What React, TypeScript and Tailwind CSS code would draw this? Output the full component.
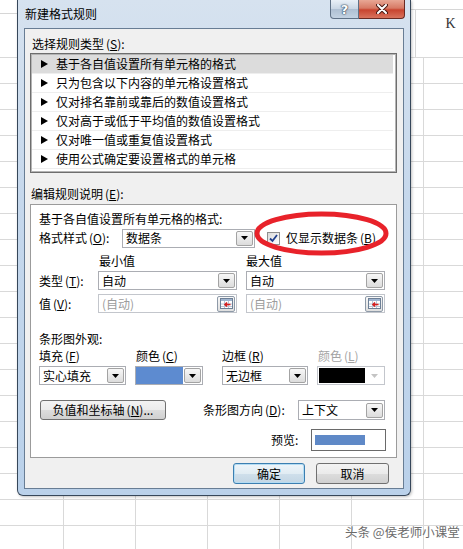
import React from "react";

function Tri() {
  return (
    <svg width="7" height="8" viewBox="0 0 7 8" className="shrink-0">
      <polygon points="0,0 7,4 0,8" fill="#000" />
    </svg>
  );
}

function DropBtn({ disabled = false }: { disabled?: boolean }) {
  if (disabled) {
    return (
      <div className="flex h-[15px] w-[17px] items-center justify-center">
        <svg width="7" height="4" viewBox="0 0 7 4">
          <path d="M0 0H7L3.5 4Z" fill="#c4c4c4" />
        </svg>
      </div>
    );
  }
  return (
    <div className="flex h-[15px] w-[17px] shrink-0 items-center justify-center rounded-[2px] border border-[#a3a3a3] bg-[linear-gradient(#f7f7f7,#dcdcdc)]">
      <svg width="7" height="4" viewBox="0 0 7 4">
        <path d="M0 0H7L3.5 4Z" fill="#000" />
      </svg>
    </div>
  );
}

function Select({ className, text }: { className: string; text: string }) {
  return (
    <div
      className={`flex h-[19px] items-center justify-between border border-[#abadb3] bg-white pl-[3px] pr-[1px] ${className}`}
    >
      <span className="leading-[16px]">{text}</span>
      <DropBtn />
    </div>
  );
}

function RefBtn() {
  return (
    <div className="flex h-[16px] w-[18px] shrink-0 items-center justify-center rounded-[2px] border border-[#8e9aa8] bg-[linear-gradient(#f7f7f7,#dfdfdf)]">
      <svg width="13" height="11" viewBox="0 0 13 11">
        <rect x="0.5" y="0.5" width="12" height="10" fill="#fff" stroke="#6d7f95" />
        <rect x="1" y="1" width="11" height="2" fill="#9fb4cf" />
        <path d="M1 6H12M1 8.5H12M4.5 3V10M8.5 3V10" stroke="#b9c6d6" />
        <path d="M10.5 6.5H5M7 4.5L5 6.5L7 8.5" stroke="#d42020" strokeWidth="1.6" fill="none" />
      </svg>
    </div>
  );
}

function RefInput({ className }: { className: string }) {
  return (
    <div
      className={`flex h-[19px] items-center justify-between border border-[#c3c6cc] bg-white pl-[3px] pr-[1px] ${className}`}
    >
      <span className="leading-[16px] text-[#9c9c9c]">(自动)</span>
      <RefBtn />
    </div>
  );
}

function U({ c }: { c: string }) {
  return (
    <span className="ml-[2px]">
      (<span className="underline">{c}</span>)
    </span>
  );
}

const rules = [
  "基于各自值设置所有单元格的格式",
  "只为包含以下内容的单元格设置格式",
  "仅对排名靠前或靠后的数值设置格式",
  "仅对高于或低于平均值的数值设置格式",
  "仅对唯一值或重复值设置格式",
  "使用公式确定要设置格式的单元格",
];

export default function App() {
  return (
    <div className="relative h-[549px] w-[463px] overflow-hidden bg-white font-['Noto_Sans_CJK_SC','Noto_Sans',sans-serif] text-[12px] leading-[16px] text-black">
      {/* spreadsheet background */}
      <div className="flex h-[57px] items-start">
        <div className="mt-[13px] w-[17px] border-t border-[#d6d6d6]" />
        <div className="flex-1" />
        <div className="mt-[9px] flex h-[48px] w-[53px] border-t border-[#d6d6d6]">
          <div className="w-[13px]" />
          <div className="h-full w-[72px] border-l border-[#d6d6d6] pl-[29px] pt-[6px] font-['Liberation_Serif',serif] text-[14px] text-[#333]">
            K
          </div>
        </div>
      </div>
      <div className="h-[492px] [background-image:linear-gradient(to_right,#d9d9d9_1px,transparent_1px),linear-gradient(to_bottom,#d9d9d9_1px,transparent_1px)] [background-position:63px_0px] [background-size:72px_26px]" />

      {/* dialog window */}
      <div className="absolute left-[17px] top-0 flex h-[496px] w-[394px] flex-col rounded-b-[6px] border-x border-b border-[#36475a] bg-[linear-gradient(180deg,#d6e2ef_0%,#c6d8ec_40%,#bad1ea_100%)] shadow-[1px_1px_3px_rgba(0,0,0,0.25)]">
        {/* title bar */}
        <div className="flex h-[28px] items-start pr-[5px]">
          <div className="ml-[7px] mt-[6px] leading-[16px]">新建格式规则</div>
          <div className="ml-auto flex">
            <div className="flex h-[19px] w-[29px] items-center justify-center rounded-bl-[4px] border border-t-0 border-[#5f7186] bg-[linear-gradient(180deg,#e9f0f7_0%,#c9d6e4_50%,#aebfd2_51%,#c3d2e2_100%)]">
              <span className="font-['DejaVu_Sans',sans-serif] text-[13px] font-bold leading-[15px] text-white [text-shadow:0_0_1px_#33475d,0_0_1px_#33475d,0_0_2px_#33475d]">
                ?
              </span>
            </div>
            <div className="flex h-[19px] w-[46px] items-center justify-center rounded-br-[4px] border border-l-0 border-t-0 border-[#6a2a22] bg-[linear-gradient(180deg,#e8a795_0%,#d77a65_45%,#c8442f_55%,#d9735d_100%)]">
              <svg width="12" height="10" viewBox="0 0 12 10">
                <path d="M2 1L10 9M10 1L2 9" stroke="#4a1a14" strokeWidth="4" strokeLinecap="round" />
                <path d="M2 1L10 9M10 1L2 9" stroke="#fff" strokeWidth="2" strokeLinecap="round" />
              </svg>
            </div>
          </div>
        </div>

        {/* inner panel */}
        <div className="mx-[6px] flex h-[461px] flex-col border border-[#687d94] bg-[#f0f0f0]">
          <div className="ml-[7px] mt-[7px] h-[16px]">
            选择规则类型<U c="S" />:
          </div>
          <div className="ml-[5px] mt-[1px] h-[120px] w-[367px] border border-[#6e6e6e]">
            <div className="h-full border border-[#b4b4b4] bg-white">
              {rules.map((r, i) => (
                <div
                  key={r}
                  className={`mr-[2px] flex h-[19px] items-center border-b border-[#eeeeee] pl-[9px] ${i === 0 ? "bg-[#dcdcdc]" : ""}`}
                >
                  <Tri />
                  <span className="ml-[8px]">{r}</span>
                </div>
              ))}
            </div>
          </div>

          <div className="ml-[6px] mt-[13px] h-[16px]">
            编辑规则说明<U c="E" />:
          </div>
          <div className="ml-[5px] mt-[2px] h-[254px] w-[367px] border border-[#9b9b9b] bg-white pl-[8px]">
            <div className="mt-[6px] h-[16px]">基于各自值设置所有单元格的格式:</div>
            <div className="mt-[2px] flex h-[18px] items-center">
              <div className="w-[83px]">
                格式样式<U c="O" />:
              </div>
              <Select className="h-[18px] w-[133px]" text="数据条" />
              <div className="ml-[12px] flex h-[13px] w-[13px] items-center justify-center border border-[#8f8f8f] bg-[linear-gradient(135deg,#dadada,#ffffff)]">
                <svg width="9" height="9" viewBox="0 0 9 9">
                  <path d="M1 4.5L3.5 7L8 1" stroke="#1f3f8c" strokeWidth="1.8" fill="none" />
                </svg>
              </div>
              <div className="ml-[6px]">
                仅显示数据条<U c="B" />
              </div>
            </div>
            <div className="mt-[6px] flex h-[16px]">
              <div className="w-[60px]" />
              <div className="w-[147px]">最小值</div>
              <div>最大值</div>
            </div>
            <div className="mt-[2px] flex h-[19px] items-center">
              <div className="w-[59px]">
                类型<U c="T" />:
              </div>
              <Select className="w-[139px]" text="自动" />
              <Select className="ml-[9px] w-[139px]" text="自动" />
            </div>
            <div className="mt-[4px] flex h-[19px] items-center">
              <div className="w-[59px]">
                值<U c="V" />:
              </div>
              <RefInput className="w-[139px]" />
              <RefInput className="ml-[9px] w-[139px]" />
            </div>

            <div className="mt-[18px] h-[16px]">条形图外观:</div>
            <div className="mt-[1px] flex h-[16px]">
              <div className="w-[97px]">
                填充<U c="F" />
              </div>
              <div className="w-[86px]">
                颜色<U c="C" />
              </div>
              <div className="w-[96px]">
                边框<U c="R" />
              </div>
              <div className="text-[#a3a3a3]">
                颜色<U c="L" />
              </div>
            </div>
            <div className="mt-[2px] flex h-[19px] items-center">
              <Select className="w-[87px]" text="实心填充" />
              <div className="ml-[9px] flex h-[19px] w-[68px] items-center justify-between border border-[#abadb3] bg-white pr-[1px]">
                <div className="h-[17px] w-[47px] bg-[#5d8bd0]" />
                <DropBtn />
              </div>
              <Select className="ml-[19px] w-[86px]" text="无边框" />
              <div className="ml-[9px] flex h-[19px] w-[68px] items-center justify-between border border-[#c3c6cc] bg-white pl-[1px] pr-[1px]">
                <div className="h-[15px] w-[46px] bg-black" />
                <DropBtn disabled />
              </div>
            </div>

            <div className="mt-[15px] flex h-[20px] items-center">
              <div className="ml-[1px] flex h-[20px] w-[126px] items-center justify-center rounded-[3px] border border-[#707070] bg-[linear-gradient(180deg,#f3f3f3_0%,#ebebeb_50%,#dddddd_51%,#d0d0d0_100%)]">
                负值和坐标轴<U c="N" />...
              </div>
              <div className="ml-[37px] w-[95px]">
                条形图方向<U c="D" />:
              </div>
              <Select className="h-[20px] w-[87px]" text="上下文" />
            </div>

            <div className="mt-[9px] flex h-[22px] items-center">
              <div className="ml-[232px] w-[40px]">预览:</div>
              <div className="flex h-[22px] w-[75px] items-center border border-[#6a6a6a] bg-white pl-[3px]">
                <div className="h-[10px] w-[50px] bg-[#5f89c7]" />
              </div>
            </div>
          </div>

          <div className="mt-[5px] flex justify-end gap-[11px] pr-[14px]">
            <div className="flex h-[21px] w-[72px] items-center justify-center rounded-[3px] border border-[#3c7fb1] bg-[linear-gradient(180deg,#eef5fa_0%,#e1ecf3_50%,#cfdfeb_51%,#c3d6e4_100%)] shadow-[inset_0_0_0_1px_#b4dcf3]">
              确定
            </div>
            <div className="flex h-[21px] w-[73px] items-center justify-center rounded-[3px] border border-[#707070] bg-[linear-gradient(180deg,#f3f3f3_0%,#ebebeb_50%,#dddddd_51%,#d0d0d0_100%)]">
              取消
            </div>
          </div>
        </div>
      </div>

      {/* red annotation ellipse */}
      <svg
        className="pointer-events-none absolute left-[253px] top-[210px]"
        width="138"
        height="48"
        viewBox="0 0 138 48"
      >
        <ellipse cx="68.5" cy="23.5" rx="64.5" ry="19.5" fill="none" stroke="#e8222a" strokeWidth="5" />
      </svg>

      {/* watermark */}
      <div className="absolute left-[345px] top-[524px] whitespace-nowrap text-[12.5px] leading-[16px] text-[#6b6b6b]">
        头条 @侯老师小课堂
      </div>
    </div>
  );
}
